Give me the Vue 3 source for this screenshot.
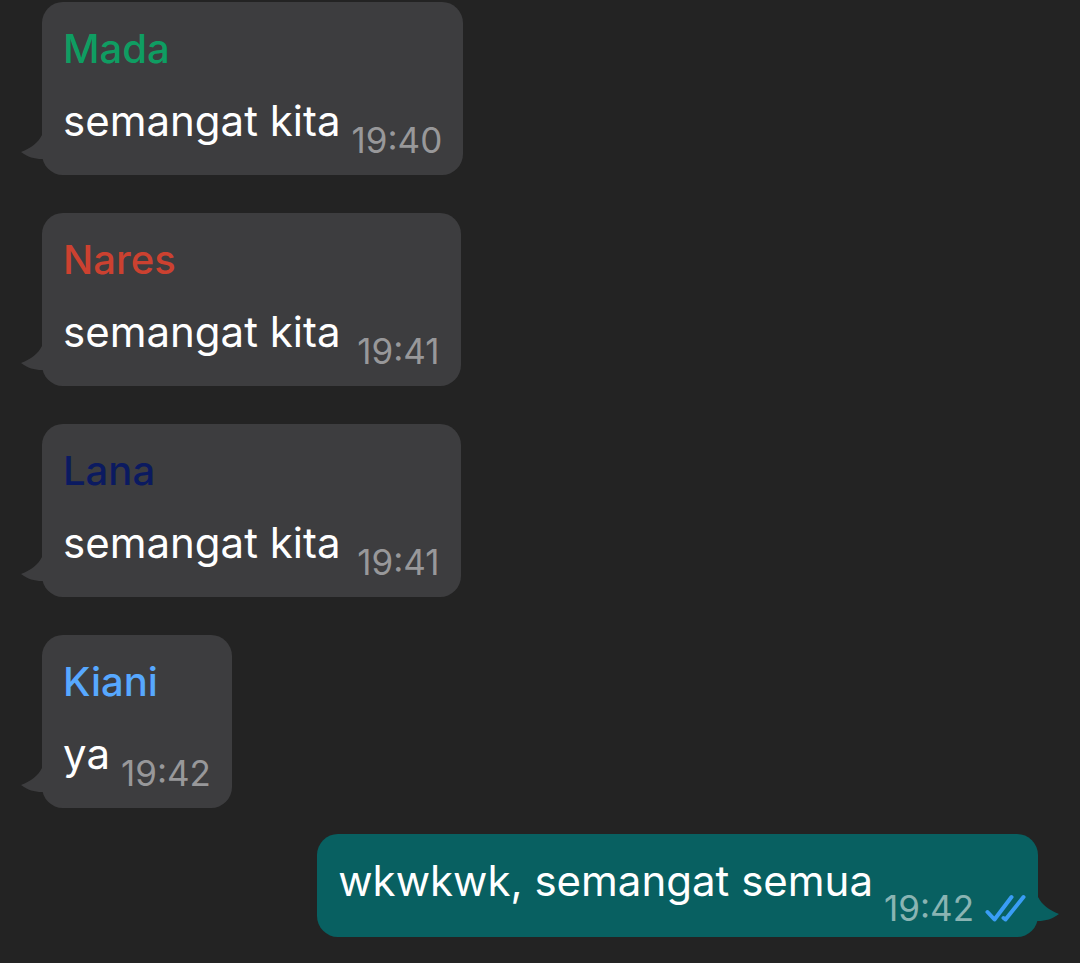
<template>
  <main class="chat">
    <article
      v-for="message in messages"
      :key="message.id"
      class="message"
      :class="{ own: message.own }"
    >
      <svg class="tail" viewBox="0 0 30 26" aria-hidden="true">
        <path d="M22 0C18 8 11 13 1 17C8 22 14 24 22 24H30V0Z" />
      </svg>
      <h2 v-if="message.author" class="author" :class="message.color">{{ message.author }}</h2>
      <div class="body">
        <p class="text">{{ message.text }}</p>
        <div class="meta">
          <time>{{ message.time }}</time>
          <svg v-if="message.own" class="checks" viewBox="0 0 42 28" role="img" aria-label="Read">
            <path d="M3.5 18L10.5 25.5L27.5 3M19.5 24L21.5 25.5L39.5 3" />
          </svg>
        </div>
      </div>
    </article>
  </main>
</template>

<script setup>
import { ref } from 'vue'

const messages = ref([
  { id: 1, author: 'Mada', color: 'green', text: 'semangat kita', time: '19:40' },
  { id: 2, author: 'Nares', color: 'red', text: 'semangat kita', time: '19:41' },
  { id: 3, author: 'Lana', color: 'navy', text: 'semangat kita', time: '19:41' },
  { id: 4, author: 'Kiani', color: 'blue', text: 'ya', time: '19:42' },
  { id: 5, own: true, text: 'wkwkwk, semangat semua', time: '19:42' }
])
</script>

<style>
body {
  margin: 0;
  background: #232323;
}
</style>

<style scoped>
.chat {
  display: flex;
  flex-direction: column;
  align-items: flex-start;
  gap: 38px;
  padding: 2px 42px 26px;
  font-family: Inter, sans-serif;
}

.message {
  position: relative;
  box-sizing: border-box;
  padding: 19px 21px 17px;
  border-radius: 21px;
  background: #3d3d3f;
  color: #fff;
}

.own {
  align-self: flex-end;
  margin-top: -12px;
  padding: 19px 12px 11px 21px;
  background: #086061;
}

.tail {
  position: absolute;
  left: -22px;
  bottom: 14px;
  width: 30px;
  height: 26px;
  fill: #3d3d3f;
}

.own .tail {
  left: auto;
  right: -22px;
  fill: #086061;
  transform: scaleX(-1);
}

.author {
  margin: 0 0 16px;
  font-size: 40px;
  font-weight: 500;
  line-height: 56px;
}

.green {
  color: #0f9d62;
}

.red {
  color: #cc4130;
}

.navy {
  color: #0b1a60;
}

.blue {
  color: #57a8ff;
}

.body {
  display: flex;
  align-items: flex-end;
  gap: 11px;
}

.text {
  margin: 0 0 9px;
  font-size: 42px;
  line-height: 56px;
}

.own .text {
  margin-bottom: 17px;
}

.meta {
  display: flex;
  align-items: center;
  gap: 10px;
  color: #98989a;
  font-size: 35px;
  line-height: 36px;
}

time {
  min-width: 88px;
  text-align: right;
}

.own .meta {
  color: #8ab4b3;
}

.checks {
  width: 42px;
  height: 28px;
  fill: none;
  stroke: #3a9df5;
  stroke-width: 4;
  stroke-linecap: round;
  stroke-linejoin: round;
}
</style>
